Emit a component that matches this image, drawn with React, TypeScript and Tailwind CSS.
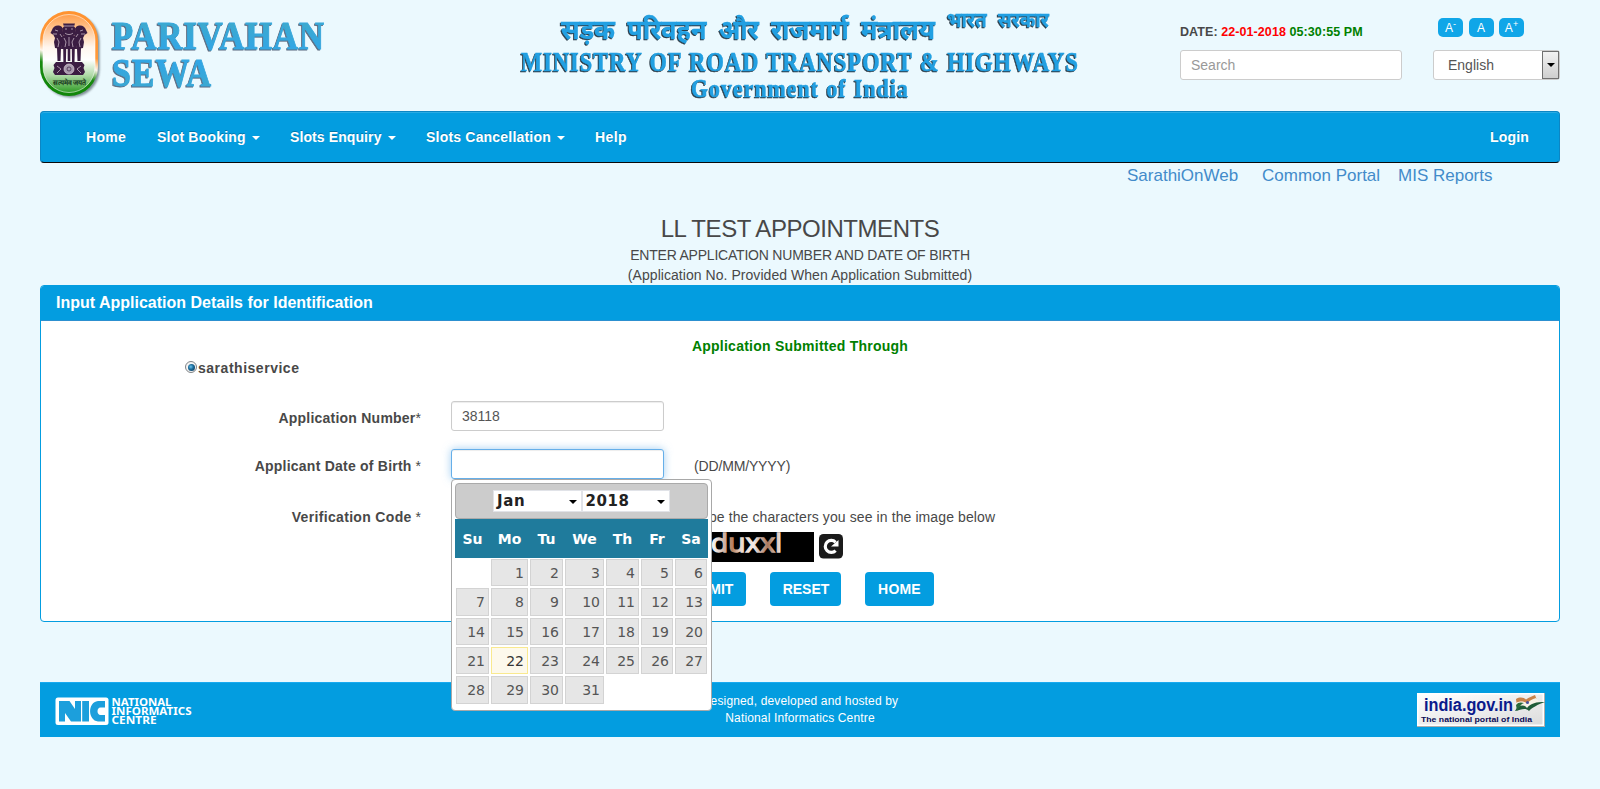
import React from 'react';

const F = "font-['Liberation_Sans',Arial,sans-serif]";

function Emblem() {
  return (
    <svg width="64" height="92" viewBox="0 0 64 92" className="block">
      <defs>
        <linearGradient id="rim" x1="0.1" y1="0" x2="-0.15" y2="1">
          <stop offset="0" stopColor="#ff9330" />
          <stop offset="0.32" stopColor="#ff9a3c" />
          <stop offset="0.45" stopColor="#fff6ec" />
          <stop offset="0.58" stopColor="#188a10" />
          <stop offset="1" stopColor="#0c8405" />
        </linearGradient>
        <linearGradient id="inner" x1="0" y1="0" x2="0" y2="1">
          <stop offset="0" stopColor="#ff9e4a" />
          <stop offset="0.18" stopColor="#ffc48f" />
          <stop offset="0.42" stopColor="#fff6ee" />
          <stop offset="0.58" stopColor="#ffffff" />
          <stop offset="0.78" stopColor="#aed9a6" />
          <stop offset="1" stopColor="#2f9c25" />
        </linearGradient>
        <filter id="soft" x="-20%" y="-20%" width="140%" height="140%">
          <feGaussianBlur stdDeviation="1.2" />
        </filter>
      </defs>
      <rect x="2.500" y="2.500" width="57" height="84" rx="28" fill="#53646c" opacity="0.7" filter="url(#soft)" />
      <rect x="0" y="0" width="58" height="85" rx="29" fill="url(#rim)" />
      <rect x="3" y="3.500" width="52" height="78" rx="26" fill="url(#inner)" stroke="#ffffff" strokeOpacity="0.55" />
      <g fill="#3b1d42">
        <path d="M23 12.500h12l-1 3 2 2-1 6-3 3h-6l-3-3-1-6 2-2z" />
        <path d="M22 16c-4-3-9-1-10 3l-1.500 3 3 2 1.500 3-1 4 1 6 6 1 3-12z" />
        <path d="M36 16c4-3 9-1 10 3l1.500 3-3 2-1.500 3 1 4-1 6-6 1-3-12z" />
        <path d="M22 25h14l1 13H21z" />
        <path d="M17 37h4l-.5 13h-3zM23.200 37h3l-.3 14h-2.500zM31.800 37h3l-.3 14h-2.500zM37 37h4l-.5 13h-3zM27.700 38h2.600v12h-2.600z" />
        <path d="M16 51h26l2.500 3-1 3 1.500 4-2 3H15l-2-3 1.500-4-1-3z" />
      </g>
      <g fill="none" stroke="#d9c9d4" strokeWidth="0.7">
        <circle cx="29" cy="58" r="5" fill="#a79aac" />
        <circle cx="29" cy="58" r="2" stroke="#3b1d42" />
        <path d="M17 55l4 3-4 4M41 55l-4 3 4 4M24 15h10M25 18h2M31 18h2M25 22c2 2 6 2 8 0M15 19l3 1M43 19l-3 1M13 23l4 0M45 23l-4 0M17 27l2 4-1 5M41 27l-2 4 1 5M24 27l2 4-1 5M34 27l-2 4 1 5M29 26v9M20 23l2 3M38 23l-2 3" />
      </g>
      <text x="12.500" y="74" fontSize="7" fontWeight="700" fill="#16351a" textLength="34" lengthAdjust="spacingAndGlyphs">सत्यमेव जयते</text>
    </svg>
  );
}

function SiteTitle() {
  return (
    <svg width="230" height="80" viewBox="0 0 230 80" className="block overflow-visible font-['Liberation_Serif',serif] font-bold">
      <defs>
        <linearGradient id="t1" x1="0" y1="0" x2="0" y2="1">
          <stop offset="0.2" stopColor="#3eaacb" />
          <stop offset="0.9" stopColor="#2fa5ea" />
        </linearGradient>
        <linearGradient id="t2" x1="0" y1="0" x2="0" y2="1">
          <stop offset="0.2" stopColor="#2fa5ea" />
          <stop offset="0.9" stopColor="#3eaacb" />
        </linearGradient>
      </defs>
      <g fontSize="40" className="tracking-[1px] [filter:drop-shadow(-1px_1px_0.6px_#5d6b80)]" strokeWidth="0.9">
        <text x="1" y="36.500" fill="url(#t1)" stroke="#37a7dc" textLength="213" lengthAdjust="spacingAndGlyphs">PARIVAHAN</text>
        <text x="1" y="74" fill="url(#t2)" stroke="#37a7dc" textLength="100" lengthAdjust="spacingAndGlyphs">SEWA</text>
      </g>
    </svg>
  );
}

function MinistryTitle() {
  return (
    <svg width="570" height="108" viewBox="0 0 570 108" className="block font-bold [filter:drop-shadow(-1px_1px_0.6px_#2c3c48)]" fill="#22a0e2" stroke="#22a0e2">
      <g className="font-['Noto_Sans_Devanagari','Noto_Sans','FreeSans',sans-serif]" strokeWidth="0.3">
        <text x="46" y="39" fontSize="27" className="[word-spacing:6px]" textLength="374" lengthAdjust="spacingAndGlyphs">सड़क परिवहन और राजमार्ग मंत्रालय</text>
        <text x="432" y="27" fontSize="20" className="[word-spacing:7px]" textLength="102" lengthAdjust="spacingAndGlyphs">भारत सरकार</text>
      </g>
      <g className="font-['Liberation_Serif',serif]" strokeWidth="0.5">
        <text x="6" y="71" fontSize="27" className="tracking-[1.200px] [word-spacing:1px]" textLength="558" lengthAdjust="spacingAndGlyphs">MINISTRY OF ROAD TRANSPORT &amp; HIGHWAYS</text>
        <text x="176" y="96.500" fontSize="25.500" className="tracking-[1.200px] [word-spacing:1px]" textLength="218" lengthAdjust="spacingAndGlyphs">Government of India</text>
      </g>
    </svg>
  );
}

function Caret() {
  return <span className="ml-[6px] inline-block h-0 w-0 border-x-4 border-t-4 border-x-transparent border-t-white align-middle" />;
}

const days = ['Su', 'Mo', 'Tu', 'We', 'Th', 'Fr', 'Sa'];

function DatePicker() {
  return (
    <div className="absolute left-0 top-full z-10 h-[232px] w-[261px] rounded-[4px] border border-[#a8a8a8] bg-white p-[3px] font-['DejaVu_Sans',Verdana,sans-serif]">
      <div className="flex h-[36px] justify-center rounded-[4px] border border-[#aaaaaa] bg-[#cccccc] pt-[6px]">
        {['Jan', '2018'].map((t) => (
          <div key={t} className="flex h-[22px] w-[88.500px] items-center justify-between border border-[#e1e3e8] bg-white pl-[3px] pr-[4px] pt-px text-[15px] font-bold leading-none tracking-[0.600px] text-[#222222]">
            <span>{t}</span>
            <span className="h-0 w-0 border-x-4 border-t-4 border-x-transparent border-t-black" />
          </div>
        ))}
      </div>
      <div className="grid h-[39px] grid-cols-[35px_39px_35px_41px_35px_34px_34px] items-center bg-[#1f7b9c] text-center text-[14px] font-bold text-white">
        {days.map((d) => (
          <span key={d}>{d}</span>
        ))}
      </div>
      <div className="grid grid-cols-[33px_37px_33px_39px_33px_32px_32px] grid-rows-[27px_28px_27px_27px_28px] gap-[2px] px-px pt-px text-[14px] text-[#555555]">
        <span />
        {Array.from({ length: 31 }, (_, i) => i + 1).map((n) => (
          <div
            key={n}
            className={
              n === 22
                ? 'flex items-center justify-end border border-[#f9e98f] bg-[#fdf9ec] pr-[3px] text-[#363636]'
                : 'flex items-center justify-end border border-[#d3d3d3] bg-[#e6e6e6] pr-[3px]'
            }
          >
            {n}
          </div>
        ))}
      </div>
    </div>
  );
}

function NicLogo() {
  return (
    <svg width="142" height="30" viewBox="0 0 142 30" className="block">
      <rect x="0.500" y="0.500" width="53" height="27.500" rx="2.500" fill="#fff" />
      <g fill="#1c9fdc">
        <path d="M4 4h10.500l5.500 8V4h6v20.500h-10l-6-8.500v8.500H4z" />
        <path d="M27.200 4h6.800v20.500h-6.800z" />
        <path d="M50 4v6.500h-4.500c-4 0-4 7.500 0 7.500H50v6.500h-7c-10-1-11-19 0-20.500z" />
      </g>
      <g fill="#fff" fontSize="10.500" fontWeight="700" className="font-['Noto_Sans',sans-serif]">
        <text x="56.500" y="8.800" textLength="60" lengthAdjust="spacingAndGlyphs">NATIONAL</text>
        <text x="56.500" y="18" textLength="80" lengthAdjust="spacingAndGlyphs">INFORMATICS</text>
        <text x="56.500" y="27.200" textLength="45" lengthAdjust="spacingAndGlyphs">CENTRE</text>
      </g>
    </svg>
  );
}

function IndiaBadge() {
  return (
    <svg width="128" height="34" viewBox="0 0 128 34" className="block">
      <defs>
        <linearGradient id="bg" x1="0" y1="0" x2="1" y2="1">
          <stop offset="0" stopColor="#ffffff" />
          <stop offset="1" stopColor="#dcdcdc" />
        </linearGradient>
      </defs>
      <rect x="0" y="0" width="128" height="34" fill="#b0aeac" />
      <rect x="0" y="0" width="127" height="33" fill="#fff" />
      <rect x="1.500" y="1.500" width="124" height="30" fill="url(#bg)" />
      <g className="font-['Liberation_Sans',sans-serif]" fontWeight="700">
        <text x="7" y="17.500" fontSize="17.500" fill="#0a1a8c" textLength="89" lengthAdjust="spacingAndGlyphs">india.gov.in</text>
        <text x="4" y="28.500" fontSize="8" fill="#0a0a55" textLength="111" lengthAdjust="spacingAndGlyphs">The national portal of India</text>
      </g>
      <path d="M99 6c4-2.500 8-1.500 10 .5 3-2.500 6-3 9-4.500l1.500 4c-4 1-7 3-9 5-3-2.500-7-3-11-1z" fill="#c8834a" />
      <path d="M99 10c5-2.500 8-1.500 11 .5 2-2.500 5-4.500 9-5.500l3 4c-5 1-8 4-11 6-4-3-8-2-12 1z" fill="#f7f2e6" />
      <path d="M98 18c3-6 9-7 12-3 4-5 9-6 18-6-8 3-12 5-16 9-4-4-8-1-14 0z" fill="#1f5c38" />
      <path d="M99 12c2-3 5-3 8-2-3 1-5 4-7 8z" fill="#2a6b3c" />
      <circle cx="110.500" cy="9.500" r="1.500" fill="#4450a0" />
    </svg>
  );
}

export default function App() {
  return (
    <div className={`h-[789px] w-full overflow-hidden bg-[#ebf9fe] px-[40px] text-[14px] leading-[20px] text-[#484848] ${F}`}>
      <header className="flex h-[111px]">
        <div className="flex w-[475px]">
          <div className="pt-[11px]"><Emblem /></div>
          <div className="ml-[7px] pt-[12px]"><SiteTitle /></div>
        </div>
        <div className="w-[665px]"><MinistryTitle /></div>
        <div className="w-[253px] pt-[22px]">
          <div className="h-[28px] whitespace-nowrap text-[12.500px] font-bold tracking-[0.080px]">
            DATE: <span className="text-[#ff0000]">22-01-2018</span> <span className="text-[#008000]">05:30:55 PM</span>
          </div>
          <div className="flex h-[30px] w-[222px] items-center rounded-[3px] border border-[#cccccc] bg-white px-[10px] text-[#999999]">Search</div>
        </div>
        <div className="w-[127px] pt-[18px]">
          <div className="flex h-[32px] gap-[5.500px] pl-[5px]">
            {['-', '', '+'].map((s, i) => (
              <div key={i} className="flex h-[19px] w-[25px] items-center justify-center rounded-[5px] bg-[#10a6e8] text-[12px] leading-none text-white">
                A{s && <span className="mb-[6px] text-[9px]">{s}</span>}
              </div>
            ))}
          </div>
          <div className="flex h-[30px] items-center justify-between rounded-[3px] border border-[#cccccc] bg-white pl-[14px] text-[#555555]">
            <span>English</span>
            <span className="flex h-[28px] w-[17px] items-center justify-center border border-[#707070] bg-linear-to-b from-[#f2f2f2] to-[#cfcfcf]">
              <span className="h-0 w-0 border-x-4 border-t-4 border-x-transparent border-t-black" />
            </span>
          </div>
        </div>
      </header>

      <nav className="flex h-[52px] items-center rounded-[4px] border border-b-[#0a0a0a] border-x-[#0c86c4] border-t-[#0c86c4] bg-[#039de0] pl-[45px] pr-[30px] font-bold text-white shadow-[inset_0_1px_0_#2aace4] [text-shadow:0_-1px_0_rgba(0,0,0,0.25)]">
        <span className="w-[71px] tracking-[0.300px]">Home</span>
        <span className="w-[133px] tracking-[0.200px]">Slot Booking<Caret /></span>
        <span className="w-[136px] tracking-[0.100px]">Slots Enquiry<Caret /></span>
        <span className="w-[169px] tracking-[0.200px]">Slots Cancellation<Caret /></span>
        <span className="tracking-[0.400px]">Help</span>
        <span className="ml-auto tracking-[0.200px]">Login</span>
      </nav>

      <div className="flex h-[51px] pl-[1087px] pt-[3px] text-[17px] text-[#428bca]">
        <span className="w-[135px]">SarathiOnWeb</span>
        <span className="w-[136px]">Common Portal</span>
        <span>MIS Reports</span>
      </div>

      <div className="h-[71px] text-center">
        <h1 className="h-[31px] text-[24px] leading-[29px] tracking-[-0.450px]">LL TEST APPOINTMENTS</h1>
        <p className="tracking-[-0.210px]">ENTER APPLICATION NUMBER AND DATE OF BIRTH</p>
        <p className="tracking-[0.050px]">(Application No. Provided When Application Submitted)</p>
      </div>

      <main className="h-[337px] rounded-[4px] border border-[#039de0] bg-white">
        <div className="flex h-[35px] items-center rounded-t-[3px] border-b border-[#2c90d0] bg-[#039de0] pb-px pl-[15px] text-[16px] font-bold text-white">Input Application Details for Identification</div>
        <div className="pt-[15px] text-center font-bold tracking-[0.240px] text-[#008000]">Application Submitted Through</div>
        <div className="flex h-[45px] items-start pl-[144px] pt-[2px]">
          <span className="mt-[3px] flex h-[12px] w-[12px] items-center justify-center rounded-full border border-[#7f8386] bg-[#f4f4f4]">
            <span className="h-[7px] w-[7px] rounded-full bg-radial-[at_40%_40%] from-[#6cc4ee] via-[#1d6f9e] via-40% to-[#0a2c48]" />
          </span>
          <span className="ml-px font-bold tracking-[0.520px]">sarathiservice</span>
        </div>
        <div className="flex h-[48px] gap-[30px]">
          <div className="w-[380px] pt-[7px] text-right"><b className="tracking-[0.230px]">Application Number</b>*</div>
          <div className="flex h-[30px] w-[213px] items-center rounded-[3px] border border-[#cccccc] bg-white pl-[10px] text-[#555555] shadow-[inset_0_1px_1px_rgba(0,0,0,0.075)]">38118</div>
        </div>
        <div className="flex h-[51px] gap-[30px]">
          <div className="w-[380px] pt-[7px] text-right"><b className="tracking-[0.230px]">Applicant Date of Birth</b> *</div>
          <div className="relative h-[30px] w-[213px]">
            <div className="h-[30px] rounded-[3px] border border-[#66afe9] bg-white shadow-[inset_0_1px_1px_rgba(0,0,0,0.075),0_0_8px_rgba(102,175,233,0.6)]" />
            <DatePicker />
          </div>
          <div className="pt-[7px] tracking-[-0.150px]">(DD/MM/YYYY)</div>
        </div>
        <div className="flex h-[32px] gap-[30px]">
          <div className="w-[380px] pt-[7px] text-right"><b className="tracking-[0.330px]">Verification Code</b> *</div>
          <div className="h-[30px] w-[213px] rounded-[3px] border border-[#cccccc]" />
          <div className="pt-[7px] tracking-[0.100px]">Type the characters you see in the image below</div>
        </div>
        <div className="flex h-[40px] items-start pl-[653px]">
          <div className="h-[30px] w-[120px] bg-black">
            <svg width="120" height="30" viewBox="0 0 120 30" className="block">
              <defs>
                <linearGradient id="cap" x1="0" y1="0" x2="1" y2="0">
                  <stop offset="0" stopColor="#ffffff" />
                  <stop offset="0.15" stopColor="#d8c4ba" />
                  <stop offset="0.3" stopColor="#b9825f" />
                  <stop offset="0.42" stopColor="#ead9d0" />
                  <stop offset="0.6" stopColor="#f2ebe8" />
                  <stop offset="0.8" stopColor="#a8765c" />
                  <stop offset="1" stopColor="#f4f1ef" />
                </linearGradient>
              </defs>
              <text x="17" y="20" fontSize="25" fill="url(#cap)" stroke="url(#cap)" strokeWidth="1.300" textLength="71" className="font-['Open_Sans','Noto_Sans',sans-serif]" lengthAdjust="spacingAndGlyphs">duxxl</text>
            </svg>
          </div>
          <svg width="24" height="25" viewBox="0 0 24 25" className="ml-[5px] mt-[2px] block">
            <rect width="24" height="24.500" rx="4.500" fill="#1b1b1b" />
            <path d="M16.600 8.300A6 6 0 1 0 16.600 16.600" fill="none" stroke="#fff" strokeWidth="3.200" />
            <path d="M12 12.500h7.500V6z" fill="#fff" />
          </svg>
        </div>
        <div className="flex gap-[24px] pl-[626px] font-bold text-white">
          <span className="flex h-[34px] w-[79px] items-center justify-center rounded-[4px] bg-[#039de0]">SUBMIT</span>
          <span className="flex h-[34px] w-[71px] items-center justify-center rounded-[4px] bg-[#039de0] pl-px">RESET</span>
          <span className="flex h-[34px] w-[69px] items-center justify-center rounded-[4px] bg-[#039de0] tracking-[0.200px]">HOME</span>
        </div>
      </main>

      <footer className="mt-[60px] flex h-[55px] justify-between border-t border-[#18aaf0] bg-[#039de0] pl-[15px] pr-[15px] text-[12px] leading-[17px] text-white">
        <div className="w-[142px] pt-[14px]"><NicLogo /></div>
        <div className="pt-[10px] text-center tracking-[0.150px]">
          Designed, developed and hosted by
          <br />
          National Informatics Centre
        </div>
        <div className="flex w-[142px] justify-end pt-[10px]"><IndiaBadge /></div>
      </footer>
    </div>
  );
}
